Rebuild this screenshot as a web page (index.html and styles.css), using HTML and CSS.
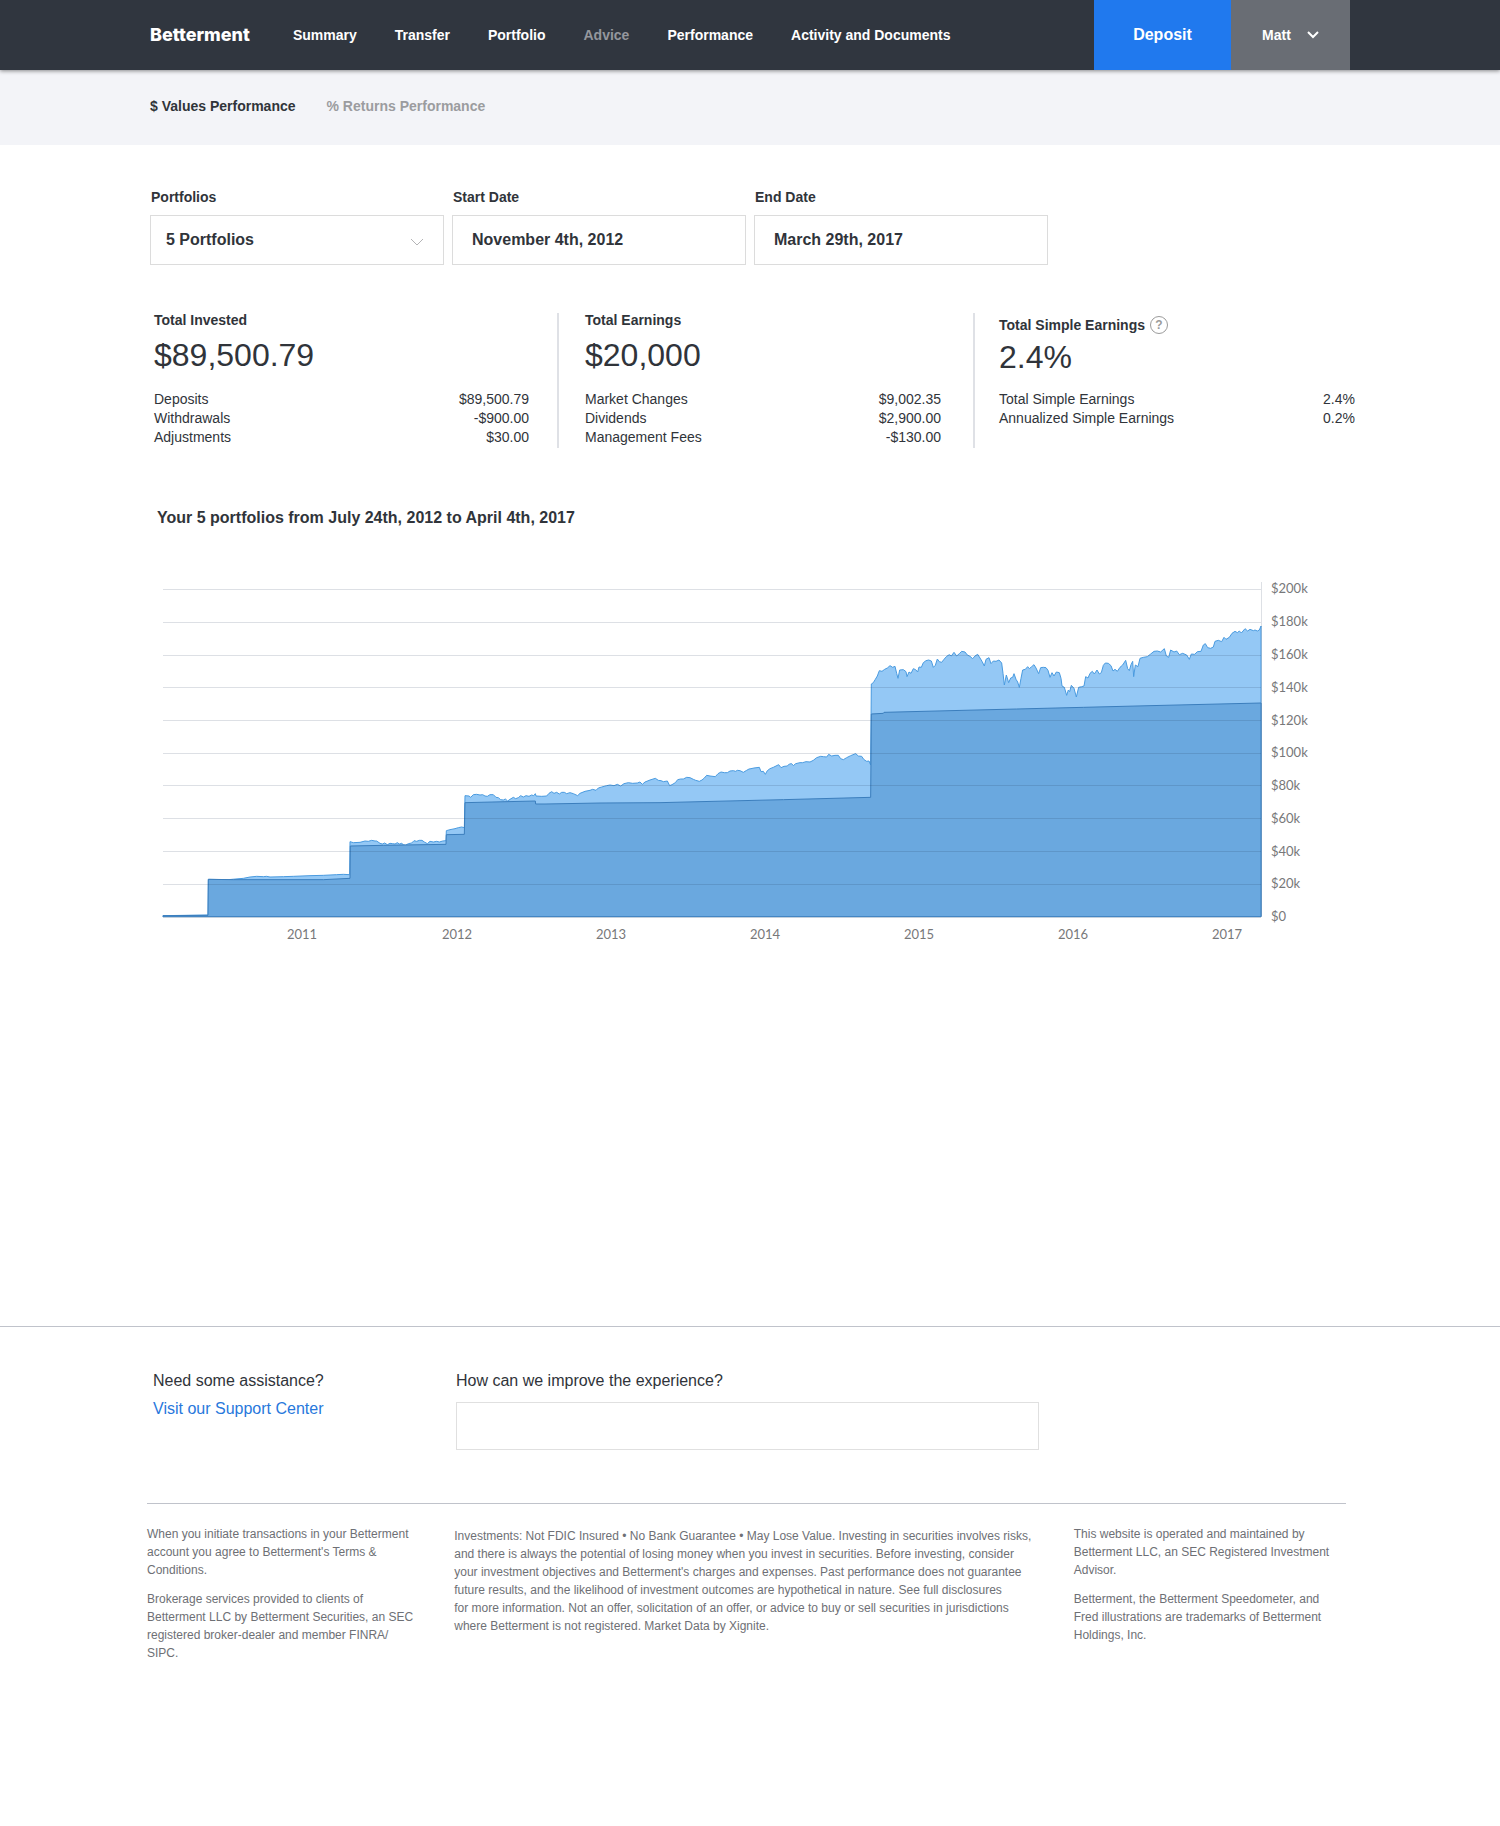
FILE: index.html
```html
<!DOCTYPE html>
<html lang="en">
<head>
<meta charset="utf-8">
<meta name="viewport" content="width=device-width, initial-scale=1">
<title>Betterment - Performance</title>
<link rel="stylesheet" href="styles.css">
</head>
<body>
<header class="topbar">
  <a class="logo" href="#">Betterment</a>
  <nav class="mainnav" aria-label="Main">
    <a href="#">Summary</a>
    <a href="#">Transfer</a>
    <a href="#">Portfolio</a>
    <a class="is-dim" href="#">Advice</a>
    <a href="#">Performance</a>
    <a href="#">Activity and Documents</a>
  </nav>
  <div class="topbar-actions">
    <button class="deposit" type="button">Deposit</button>
    <button class="account" type="button">Matt
      <svg class="account-chevron" viewBox="0 0 12 8" aria-hidden="true"><path d="M1 1l5 5 5-5"/></svg>
    </button>
  </div>
</header>

<nav class="subnav" aria-label="Performance views">
  <a class="is-active" href="#">$ Values Performance</a>
  <a href="#">% Returns Performance</a>
</nav>

<main class="page">
  <form class="filters">
    <div class="field">
      <label for="portfolios">Portfolios</label>
      <div class="select-wrap">
        <select id="portfolios"><option>5 Portfolios</option></select>
        <svg class="select-chevron" viewBox="0 0 12 8" aria-hidden="true"><path d="M0 1l6 6 6-6"/></svg>
      </div>
    </div>
    <div class="field">
      <label for="start">Start Date</label>
      <input class="date" id="start" type="text" value="November 4th, 2012">
    </div>
    <div class="field">
      <label for="end">End Date</label>
      <input class="date" id="end" type="text" value="March 29th, 2017">
    </div>
  </form>

  <section class="stats">
    <article class="stat">
      <h2>Total Invested</h2>
      <p class="figure">$89,500.79</p>
      <dl>
        <div><dt>Deposits</dt><dd>$89,500.79</dd></div>
        <div><dt>Withdrawals</dt><dd>-$900.00</dd></div>
        <div><dt>Adjustments</dt><dd>$30.00</dd></div>
      </dl>
    </article>
    <article class="stat">
      <h2>Total Earnings</h2>
      <p class="figure">$20,000</p>
      <dl>
        <div><dt>Market Changes</dt><dd>$9,002.35</dd></div>
        <div><dt>Dividends</dt><dd>$2,900.00</dd></div>
        <div><dt>Management Fees</dt><dd>-$130.00</dd></div>
      </dl>
    </article>
    <article class="stat stat-help">
      <h2>Total Simple Earnings <button class="help" type="button" aria-label="About simple earnings">?</button></h2>
      <p class="figure">2.4%</p>
      <dl>
        <div><dt>Total Simple Earnings</dt><dd>2.4%</dd></div>
        <div><dt>Annualized Simple Earnings</dt><dd>0.2%</dd></div>
      </dl>
    </article>
  </section>

  <section class="history">
    <h2>Your 5 portfolios from July 24th, 2012 to April 4th, 2017</h2>
    <svg class="chart" viewBox="0 0 1200 370" role="img" aria-label="Portfolio balance over time">
      <svg width="1200" height="370" viewBox="0 -459 3600 1110">
        <path class="balance" d="M39 560V557L174 555 175 448 235 449 280 445 300 441 320 439 340 440 350 439 360 441 400 440 430 439 480 437 520 436 560 434 580 433 599 434 600 335 610 338 630 337 645 333 655 334 665 331 675 333 680 333 690 340 697 342 704 339 712 344 720 340 728 341 735 342 742 338 748 342 755 340 760 344 766 346 775 341 785 339 792 332 800 334 808 331 816 331 823 336 832 341 840 334 850 336 860 334 868 336 878 333 888 332 889 302 900 299 915 296 925 293 935 291 943 293 945 197 957 198 962 202 970 194 980 193 990 195 998 194 1005 198 1012 199 1020 194 1030 194 1038 202 1045 203 1052 209 1060 210 1066 207 1073 213 1080 208 1090 202 1097 206 1105 203 1112 197 1120 201 1128 197 1137 199 1145 195 1151 197 1156 191 1158 198 1175 199 1190 198 1197 190 1205 185 1212 190 1220 187 1228 192 1235 187 1243 187 1250 191 1260 188 1270 191 1283 197 1290 190 1305 184 1320 181 1328 178 1338 181 1345 174 1355 171 1370 167 1380 165 1392 167 1402 163 1412 168 1422 161 1435 158 1448 160 1462 159 1470 156 1477 163 1485 156 1500 150 1516 145 1525 151 1533 152 1540 155 1552 153 1559 167 1566 164 1576 158 1583 149 1592 147 1600 147 1610 142 1620 143 1630 148 1637 151 1648 154 1656 150 1663 144 1670 136 1680 138 1696 140 1704 131 1713 126 1723 128 1732 128 1740 123 1750 122 1757 124 1762 121 1770 122 1780 127 1790 121 1797 117 1803 116 1812 114 1828 112 1833 125 1840 124 1846 133 1852 122 1860 116 1870 112 1878 108 1886 104 1893 113 1902 109 1912 108 1918 102 1925 101 1930 107 1937 101 1950 98 1958 98 1968 95 1980 96 1990 91 2000 83 2012 79 2020 80 2030 81 2036 73 2045 78 2055 76 2065 76 2072 86 2080 89 2090 83 2102 77 2117 71 2125 78 2135 79 2142 89 2150 94 2157 93 2162 105 2164 -138 2170 -142 2176 -152 2182 -162 2188 -178 2196 -176 2204 -182 2212 -186 2220 -193 2228 -188 2235 -191 2240 -170 2244 -155 2249 -180 2260 -181 2268 -175 2271 -160 2277 -174 2283 -170 2290 -184 2297 -181 2303 -174 2307 -189 2314 -188 2320 -202 2328 -208 2336 -210 2344 -207 2350 -188 2356 -194 2362 -213 2368 -205 2375 -203 2382 -212 2390 -221 2398 -226 2404 -222 2412 -233 2420 -222 2428 -229 2435 -236 2445 -234 2452 -225 2460 -221 2468 -214 2475 -222 2483 -227 2490 -216 2496 -206 2503 -192 2508 -212 2517 -217 2523 -199 2530 -207 2538 -206 2547 -210 2555 -201 2559 -170 2563 -135 2569 -165 2576 -142 2582 -156 2588 -158 2592 -169 2598 -152 2603 -144 2608 -128 2613 -155 2618 -180 2626 -182 2633 -190 2638 -184 2645 -190 2652 -196 2658 -186 2666 -169 2672 -187 2680 -188 2688 -187 2694 -179 2700 -158 2706 -172 2712 -162 2719 -174 2728 -172 2733 -155 2736 -132 2743 -128 2750 -104 2755 -120 2759 -115 2764 -134 2772 -125 2779 -99 2786 -128 2795 -130 2802 -132 2807 -160 2814 -156 2820 -170 2827 -176 2833 -168 2841 -180 2848 -168 2854 -172 2860 -194 2866 -201 2875 -200 2883 -193 2889 -177 2895 -182 2902 -176 2910 -188 2918 -195 2927 -209 2933 -184 2938 -178 2943 -196 2948 -206 2951 -160 2956 -195 2964 -190 2970 -215 2980 -218 2992 -220 3002 -228 3012 -236 3022 -237 3032 -234 3043 -244 3049 -222 3056 -218 3062 -240 3072 -234 3080 -237 3088 -226 3098 -230 3110 -225 3118 -212 3124 -228 3134 -227 3142 -235 3153 -236 3160 -255 3166 -259 3173 -247 3182 -245 3190 -249 3195 -266 3205 -269 3215 -265 3222 -278 3228 -272 3238 -278 3246 -290 3255 -296 3262 -292 3268 -297 3274 -291 3285 -304 3293 -297 3300 -302 3310 -298 3315 -300 3322 -297 3328 -300 3333 -312V560"/>
        <path class="invested" d="M39 560V557L174 556 175 448 250 449 520 449 600 445 601 348 700 346 888 343 889 314 943 313 945 218 1156 213 1157 222 1185 222 1350 219 1530 218 1650 215 1900 209 2162 202 2164 -48 2200 -50 2202 -53 2400 -58 2600 -63 2800 -68 3000 -73 3333 -81V560Z"/>
      </svg>
      <path class="grid" d="M13 12.5H1111M13 45.5H1111M13 78.5H1111M13 110.5H1111M13 143.5H1111M13 176.5H1111M13 208.5H1111M13 241.5H1111M13 274.5H1111M13 307.5H1111M13 340.5H1111M1111.5 5V340"/>
      <g class="axis">
        <text x="1121" y="16">$200k</text>
        <text x="1121" y="49">$180k</text>
        <text x="1121" y="82">$160k</text>
        <text x="1121" y="115">$140k</text>
        <text x="1121" y="148">$120k</text>
        <text x="1121" y="180">$100k</text>
        <text x="1121" y="213">$80k</text>
        <text x="1121" y="246">$60k</text>
        <text x="1121" y="279">$40k</text>
        <text x="1121" y="311">$20k</text>
        <text x="1121" y="344">$0</text>
      </g>
      <g class="axis axis-years">
        <text x="152" y="362">2011</text>
        <text x="307" y="362">2012</text>
        <text x="461" y="362">2013</text>
        <text x="615" y="362">2014</text>
        <text x="769" y="362">2015</text>
        <text x="923" y="362">2016</text>
        <text x="1077" y="362">2017</text>
      </g>
    </svg>
  </section>
</main>

<footer class="footer">
  <div class="contact">
    <div class="support">
      <p>Need some assistance?</p>
      <a href="#">Visit our Support Center</a>
    </div>
    <div class="feedback">
      <label for="feedback">How can we improve the experience?</label>
      <input id="feedback" type="text">
    </div>
  </div>
  <div class="legal">
    <div>
      <p>When you initiate transactions in your Betterment account you agree to Betterment's Terms &amp; Conditions.</p>
      <p>Brokerage services provided to clients of Betterment LLC by Betterment Securities, an SEC registered broker-dealer and member FINRA/<wbr>SIPC.</p>
    </div>
    <div class="legal-main">
      <p>Investments: Not FDIC Insured • No Bank Guarantee • May Lose Value. Investing in securities involves risks, and there is always the potential of losing money when you invest in securities. Before investing, consider your investment objectives and Betterment's charges and expenses. Past performance does not guarantee future results, and the likelihood of investment outcomes are hypothetical in nature. See full disclosures<br>for more information. Not an offer, solicitation of an offer, or advice to buy or sell securities in jurisdictions where Betterment is not registered. Market Data by Xignite.</p>
    </div>
    <div>
      <p>This website is operated and maintained by Betterment LLC, an SEC Registered Investment Advisor.</p>
      <p>Betterment, the Betterment Speedometer, and Fred illustrations are trademarks of Betterment Holdings, Inc.</p>
    </div>
  </div>
</footer>
</body>
</html>
```
FILE: styles.css
```css
* { box-sizing: border-box; }

body {
  margin: 0;
  background: #fff;
  color: #30343a;
  font: 14px/20px "Liberation Sans", Arial, sans-serif;
}

h2, p, dl, dd { margin: 0; }
a { color: inherit; text-decoration: none; }
button, input, select { font: inherit; color: inherit; }
button { border: 0; cursor: pointer; }

/* Top bar */
.topbar {
  position: relative;
  display: flex;
  align-items: center;
  height: 70px;
  padding: 0 10%;
  background: #30363f;
  color: #fff;
  font-weight: 700;
  box-shadow: 0 1px 4px rgba(0, 0, 0, .45);
}
.logo {
  font: 800 18px/20px Inter, sans-serif;
}
.mainnav {
  display: flex;
  gap: 38px;
  margin-left: 43px;
}
.mainnav .is-dim { color: #94979d; }
.topbar-actions {
  display: flex;
  align-self: stretch;
  margin-left: auto;
}
.deposit {
  width: 137px;
  background: #2079ee;
  font-size: 16px;
  font-weight: 700;
}
.account {
  display: flex;
  align-items: center;
  justify-content: center;
  gap: 16px;
  width: 119px;
  background: #696d74;
  font-weight: 700;
}
.account-chevron {
  width: 12px;
  height: 8px;
  fill: none;
  stroke: #fff;
  stroke-width: 2;
}

/* Secondary navigation */
.subnav {
  display: flex;
  gap: 31px;
  height: 75px;
  padding: 26px 10% 0;
  background: #f3f4f8;
  color: #9b9c9f;
  font-weight: 700;
}
.subnav .is-active { color: #30343a; }

.page { padding: 42px 10% 0; }

/* Filters */
.filters {
  display: grid;
  grid-template-columns: repeat(3, minmax(0, 294px));
  gap: 8px;
}
.field {
  display: grid;
  gap: 8px;
}
.field label {
  padding-left: 1px;
  font-weight: 700;
}
.select-wrap { position: relative; }
.filters select,
.filters input {
  width: 100%;
  height: 50px;
  padding: 0 15px;
  border: 1px solid #dcdcdc;
  border-radius: 0;
  background: #fff;
  font-size: 16px;
  font-weight: 700;
  appearance: none;
}
.filters .date { padding: 0 19px; }
.select-chevron {
  position: absolute;
  top: 23px;
  right: 21px;
  width: 12px;
  height: 8px;
  fill: none;
  stroke: #b4b4b6;
  pointer-events: none;
}

/* Summary figures */
.stats {
  display: grid;
  grid-template-columns: 407fr 416fr 382fr;
  margin: 48px -5px 0 0;
}
.stat {
  padding: 0 32px 0 26px;
  border-left: 2px solid #dfe1e6;
}
.stat:first-child {
  padding: 0 28px 0 4px;
  border-left: 0;
}
.stat:last-child {
  padding: 0 0 0 24px;
}
.stat h2 {
  font-size: 14px;
  line-height: 14px;
}
.figure {
  margin-top: 8px;
  font-size: 32px;
  line-height: 40px;
}
.stat dl { margin: 15px 0 1px; }
.stat dl div {
  display: flex;
  justify-content: space-between;
  line-height: 19px;
}
.stat-help h2 {
  display: flex;
  align-items: center;
  gap: 5px;
  height: 24px;
}
.stat-help .figure { margin-top: 0; }
.stat-help dl { margin-top: 13px; }
.help {
  width: 18px;
  height: 18px;
  padding: 0;
  border: 1px solid #9b9b9b;
  border-radius: 50%;
  background: none;
  color: #9b9b9b;
  font-size: 12px;
  font-weight: 700;
  line-height: 16px;
}

/* Balance history */
.history { margin-top: 60px; }
.history h2 {
  padding-left: 7px;
  font-size: 16px;
  line-height: 20px;
}
.chart {
  display: block;
  width: 100%;
  margin-top: 49px;
}
.balance {
  fill: #94c8f5;
  stroke: #4a9be0;
  stroke-width: 3;
}
.invested {
  fill: #6aa8df;
  stroke: #3b7ebd;
  stroke-width: 3;
}
.grid {
  fill: none;
  stroke: rgba(30, 50, 80, .15);
}
.axis {
  fill: #77787a;
  font: 13px Lato, sans-serif;
}
.axis-years { text-anchor: middle; }

/* Footer */
.footer {
  margin-top: 379px;
  padding: 0 10% 163px;
  border-top: 1px solid #c0c3cb;
}
.contact {
  display: grid;
  grid-template-columns: 309fr 583fr 307fr;
  margin: 0 4px 0 -3px;
  padding: 44px 0 53px;
  border-bottom: 1px solid #c0c3cb;
  font-size: 16px;
}
.support {
  display: grid;
  gap: 8px;
  align-content: start;
  padding-left: 6px;
}
.support a { color: #2878dc; }
.feedback {
  display: grid;
  gap: 11px;
}
.feedback input {
  width: 100%;
  height: 48px;
  padding: 0 15px;
  border: 1px solid #e0e0e0;
  background: #fff;
}
.legal {
  display: grid;
  grid-template-columns: 272fr 584fr 272fr;
  gap: 35px;
  margin: 21px 4px 0 -3px;
  color: #6e7075;
  font-size: 12px;
  line-height: 18px;
}
.legal div {
  display: grid;
  gap: 11px;
  align-content: start;
}
.legal .legal-main { padding-top: 2px; }
```
